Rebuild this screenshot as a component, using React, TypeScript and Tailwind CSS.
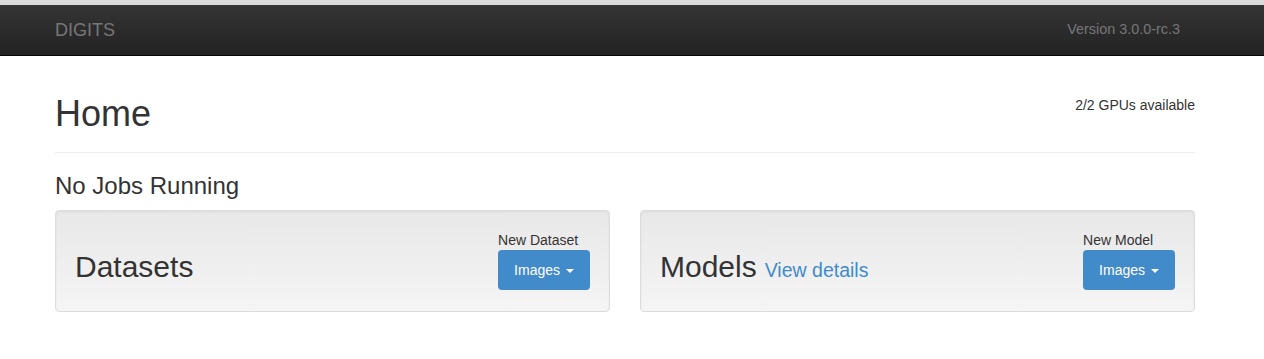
import React from 'react';

const Caret = () => (
  <span className="ml-[6px] inline-block h-0 w-0 border-x-[4px] border-t-[4px] border-x-transparent border-t-white align-middle" />
);

const Well = ({ title, extra, label }: { title: string; extra?: string; label: string }) => (
  <div className="flex justify-between items-start rounded-[4px] border border-[#dcdcdc] bg-gradient-to-b from-[#e8e8e8] to-[#f5f5f5] px-[19px] pt-[19px] pb-[21px] shadow-[inset_0_1px_3px_rgba(0,0,0,0.05)]">
    <h2 className="mt-[20px] text-[30px] leading-[33px] text-[#333]">
      {title}
      {extra && <a className="ml-[8px] text-[19.5px] text-[#428bca]">{extra}</a>}
    </h2>
    <div className="flex flex-col items-start">
      <span className="text-[14px] leading-[20px] text-[#333]">{label}</span>
      <button className="h-[40px] rounded-[4px] bg-[#428bca] px-[16px] text-[14px] leading-[20px] text-white">
        Images
        <Caret />
      </button>
    </div>
  </div>
);

export default function App() {
  return (
    <div className="min-h-screen bg-white font-['Liberation_Sans',Arial,sans-serif] text-[#333]">
      <div className="h-[5px] bg-[#dadada]" />
      <nav className="h-[51px] border-b border-[#080808] bg-gradient-to-b from-[#353535] to-[#222]">
        <div className="ml-[40px] flex h-[50px] w-[1170px] items-center justify-between px-[15px]">
          <span className="text-[18px] text-[#777]">DIGITS</span>
          <span className="mr-[15px] text-[14.4px] text-[#777]">Version 3.0.0-rc.3</span>
        </div>
      </nav>
      <main className="ml-[40px] w-[1170px] px-[15px]">
        <div className="mt-[38px] flex items-start justify-between border-b border-[#eee] pb-[18px]">
          <h1 className="text-[36px] leading-[40px] font-normal">Home</h1>
          <span className="mt-[1px] text-[14px] leading-[20px]">2/2 GPUs available</span>
        </div>
        <h3 className="mt-[20px] text-[24px] leading-[26px]">No Jobs Running</h3>
        <div className="mt-[11px] grid grid-cols-2 gap-[30px]">
          <Well title="Datasets" label="New Dataset" />
          <Well title="Models" extra="View details" label="New Model" />
        </div>
      </main>
    </div>
  );
}
